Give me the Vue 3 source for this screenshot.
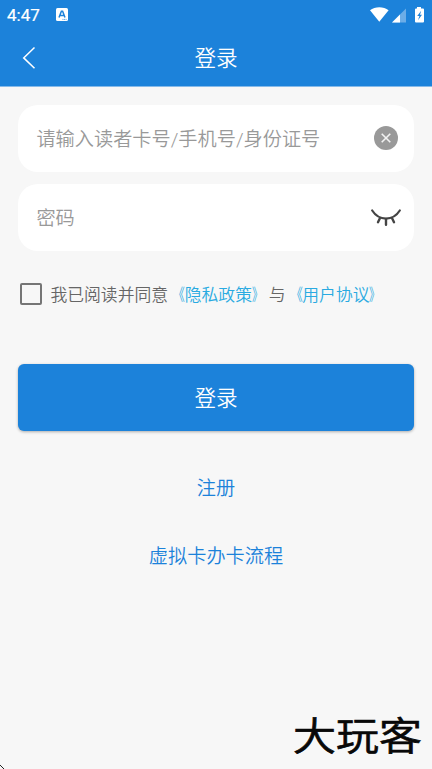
<script setup>
import { ref } from 'vue'

const account = ref('')
const password = ref('')
const agreed = ref(false)
</script>

<template>
  <div class="screen" lang="zh-CN">
    <header class="header">
      <div class="status">
        <span class="time">4:47</span>
        <svg class="app-badge" width="12" height="13" viewBox="0 0 12 13">
          <rect width="12" height="13" rx="1.5" fill="#fff" />
          <path d="M3 9.600 5.400 3.200h1.200L9 9.600M4 7.600h4" fill="none" stroke="#1c82da" stroke-width="1.500" />
          <path d="M6.5 11.400h4" stroke="#1c82da" stroke-width=".8" stroke-dasharray="1 .6" />
        </svg>
        <svg class="indicators" width="54" height="16" viewBox="0 0 54 16">
          <path d="M0 3.3C5-.7 13.6-.7 18.6 3.300L9.300 14.700Z" fill="#fff" />
          <path d="M36 1.500v14H22Z" fill="#6cade7" />
          <path d="M30 7.500v8h-8Z" fill="#fff" />
          <path d="M47 0h4v1.600h2q1 0 1 1V14.500q0 1-1 1h-7q-1 0-1-1V2.600q0-1 1-1h1Z" fill="#fff" />
          <path d="M51.200 3.800 47.200 8.900h2.200l-1.400 4.300 4-5.500h-2Z" fill="#1c82da" />
        </svg>
      </div>
      <div class="title-bar">
        <svg class="back" width="14" height="24" viewBox="0 0 14 24">
          <path d="M12.500 1.500 1.700 11.900 12.500 22.300" fill="none" stroke="#fff" stroke-width="1.500" />
        </svg>
        <h1>登录</h1>
      </div>
    </header>

    <main class="content">
      <label class="field">
        <input v-model="account" type="text" placeholder="请输入读者卡号/手机号/身份证号" />
        <svg class="clear" width="24" height="24" viewBox="0 0 24 24">
          <circle cx="12" cy="12" r="12" fill="#999" />
          <path d="m7.700 7.700 8.600 8.600m0-8.600-8.600 8.600" stroke="#f2f2f2" stroke-width="1.600" />
        </svg>
      </label>
      <label class="field">
        <input v-model="password" type="password" placeholder="密码" />
        <svg class="eye" width="30" height="18" viewBox="0 0 30 18" fill="none" stroke="#444" stroke-linecap="round">
          <path d="M1.200 1.500C8 12.200 22 12.200 28.800 1.500" stroke-width="2.200" />
          <path d="M8.800 9.500 7 13.200M15 10v5.800M21.200 9.500l1.800 3.700" stroke-width="2.400" />
        </svg>
      </label>

      <label class="agreement">
        <input v-model="agreed" type="checkbox" />
        <span>我已阅读并同意<a><i class="open">《</i>隐私政策<i class="close">》</i></a>与<a><i class="open">《</i>用户协议<i class="close">》</i></a></span>
      </label>

      <button class="submit" type="button">登录</button>
      <a class="link">注册</a>
      <a class="link guide">虚拟卡办卡流程</a>
    </main>

    <div class="brand">大玩客</div>
    <svg class="corner" width="5" height="5" viewBox="0 0 5 5">
      <path d="M0 1 4 5" stroke="#222" stroke-width="1" />
    </svg>
  </div>
</template>

<style>
body {
  background: #f7f7f7;
}
</style>

<style scoped>
.screen {
  position: relative;
  display: flex;
  flex-direction: column;
  height: 769px;
  overflow: hidden;
  background: #f7f7f7;
  font-family: Roboto, "Noto Sans CJK SC", sans-serif;
  font-weight: 350;
}
.header {
  box-sizing: border-box;
  height: 87px;
  background: #1c82da;
  border-bottom: 1px solid #86bae9;
  color: #fff;
}
.status {
  display: flex;
  align-items: center;
  height: 29px;
  padding: 0 8px 0 7px;
}
.time {
  width: 49px;
  padding-top: 1px;
  font-size: 17px;
  font-weight: 400;
  line-height: 28px;
  -webkit-text-stroke: 0.2px #fff;
}
.indicators {
  margin: 0 0 0 auto;
}
.title-bar {
  display: flex;
  align-items: center;
  height: 57px;
}
.back {
  margin-left: 22px;
}
h1 {
  flex: 1;
  margin: 0 36px 0 0;
  padding-top: 2px;
  font-size: 21.6px;
  font-weight: 350;
  line-height: 55px;
  text-align: center;
}
.content {
  display: flex;
  flex-direction: column;
  padding: 18px 18px 0;
}
.field {
  display: flex;
  align-items: center;
  box-sizing: border-box;
  height: 67px;
  margin-bottom: 12px;
  padding: 0 16px 0 18.400px;
  border-radius: 20px;
  background: #fff;
}
.field input {
  flex: 1;
  min-width: 0;
  height: 32px;
  padding: 2px 0 0;
  border: 0;
  outline: 0;
  background: none;
  font: inherit;
  font-size: 19.2px;
}
.field input::placeholder {
  color: #999;
  opacity: 1;
}
.clear {
  margin-bottom: 1px;
}
.eye {
  margin-right: -3px;
}
.agreement {
  display: flex;
  align-items: center;
  height: 30px;
  margin-top: 16px;
  padding-left: 2px;
  color: #666;
  font-size: 16.800px;
  line-height: 30px;
  white-space: nowrap;
}
.agreement span {
  padding-top: 2px;
}
.agreement input {
  appearance: none;
  box-sizing: border-box;
  width: 22px;
  height: 22px;
  margin: 0 8.500px 0 0;
  border: 2px solid #757575;
  border-radius: 2px;
}
.agreement a {
  color: #29aae1;
}
.agreement i {
  display: inline-block;
  width: 16.800px;
  font-style: normal;
}
.open {
  transform: scaleX(0.7);
  transform-origin: right;
}
.close {
  transform: scaleX(0.65);
  transform-origin: left;
}
.submit {
  height: 67px;
  margin-top: 55px;
  padding: 0 0 2px;
  border: 0;
  border-radius: 6px;
  background: #1c82da;
  box-shadow: 0 1px 3px rgba(0, 0, 0, 0.3);
  color: #fff;
  font: inherit;
  font-size: 21.6px;
}
.link {
  align-self: center;
  height: 30px;
  margin-top: 43px;
  color: #1c82da;
  font-size: 19.2px;
  line-height: 30px;
}
.guide {
  margin-top: 38px;
}
.brand {
  position: absolute;
  right: 10px;
  bottom: 9px;
  color: #080808;
  font-size: 43px;
  font-weight: 350;
  line-height: 48px;
  transform: scaleY(0.9);
  -webkit-text-stroke: 0.8px #080808;
}
.corner {
  position: absolute;
  left: 0;
  bottom: 0;
}
</style>
